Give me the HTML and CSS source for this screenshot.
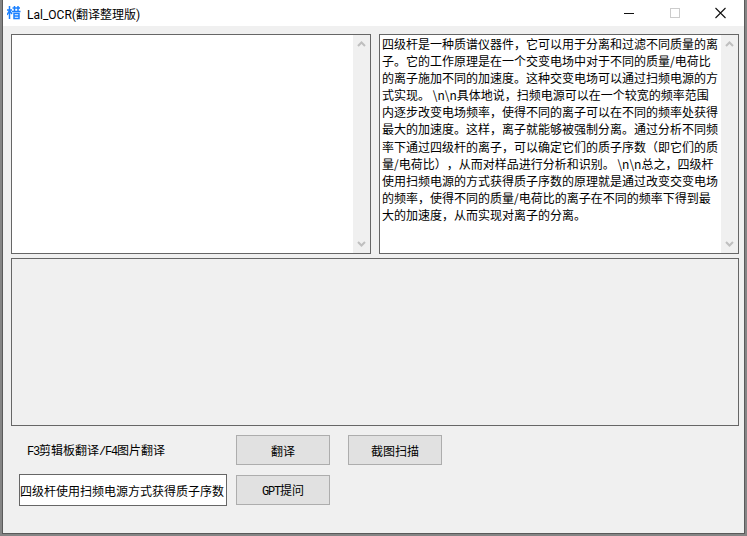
FILE: index.html
```html
<!DOCTYPE html>
<html lang="zh-CN">
<head>
  <meta charset="UTF-8" />
  <title>Lal_OCR(翻译整理版)</title>
  <link rel="stylesheet" href="styles.css">
</head>
<body>

  <div class="window">
    <div class="frame">
      <div class="titlebar">
        <svg class="app-icon" width="16" height="16" viewBox="0 0 16 16">
          <path d="M0 5h5M2.500 1v13M2.500 5.500L0 10M2.500 5.500L5 9M5.500 3h7.500M7.500 1v5M11 1v5M5 6.500h8.500M7 8.500h5v5h-5zM7 11h5" fill="none" stroke="#1a80ff" stroke-width="1.500" />
        </svg>
        <span class="title">Lal_OCR(翻译整理版)</span>
        <div class="win-buttons">
          <svg class="win-btn" width="46" height="26" viewBox="0 0 46 26"><path d="M18 13.500h10" stroke="#111" stroke-width="1" /></svg>
          <svg class="win-btn" width="46" height="26" viewBox="0 0 46 26"><rect x="18.500" y="8.500" width="9" height="9" fill="none" stroke="#ccc" /></svg>
          <svg class="win-btn" width="46" height="26" viewBox="0 0 46 26"><path d="M17.500 8l10 10M27.500 8l-10 10" stroke="#111" stroke-width="1.100" /></svg>
        </div>
      </div>

      <div class="content">
        <div class="text-row">
          <div class="textbox">
            <div class="text-body"></div>
            <div class="scrollbar">
              <svg width="9" height="6" viewBox="0 0 9 6"><path d="M1 5l3.500-3.500L8 5" fill="none" stroke="#bfbfbf" stroke-width="2" /></svg>
              <svg width="9" height="6" viewBox="0 0 9 6"><path d="M1 1l3.500 3.500L8 1" fill="none" stroke="#bfbfbf" stroke-width="2" /></svg>
            </div>
          </div>
          <div class="textbox">
            <div class="text-body">四级杆是一种质谱仪器件，它可以用于分离和过滤不同质量的离子。它的工作原理是在一个交变电场中对于不同的质量/电荷比的离子施加不同的加速度。这种交变电场可以通过扫频电源的方式实现。 \n\n具体地说，扫频电源可以在一个较宽的频率范围内逐步改变电场频率，使得不同的离子可以在不同的频率处获得最大的加速度。这样，离子就能够被强制分离。通过分析不同频率下通过四级杆的离子，可以确定它们的质子序数（即它们的质量/电荷比），从而对样品进行分析和识别。 \n\n总之，四级杆使用扫频电源的方式获得质子序数的原理就是通过改变交变电场的频率，使得不同的质量/电荷比的离子在不同的频率下得到最大的加速度，从而实现对离子的分离。</div>
            <div class="scrollbar">
              <svg width="9" height="6" viewBox="0 0 9 6"><path d="M1 5l3.500-3.500L8 5" fill="none" stroke="#bfbfbf" stroke-width="2" /></svg>
              <svg width="9" height="6" viewBox="0 0 9 6"><path d="M1 1l3.500 3.500L8 1" fill="none" stroke="#bfbfbf" stroke-width="2" /></svg>
            </div>
          </div>
        </div>

        <div class="panel"></div>

        <div class="controls">
          <div class="hint"><span class="latin">F3</span>剪辑板翻译<span class="latin">/F4</span>图片翻译</div>
          <button class="btn">翻译</button>
          <button class="btn">截图扫描</button>
          <input class="question" type="text" value="四级杆使用扫频电源方式获得质子序数" />
          <button class="btn"><span class="latin">GPT</span>提问</button>
        </div>
      </div>
    </div>
  </div>

</body>
</html>
```

FILE: styles.css
```css
html, body {
  margin: 0;
  padding: 0;
}
body {
  width: 747px;
  height: 536px;
  overflow: hidden;
  font-family: "Noto Sans CJK SC", "Liberation Sans", sans-serif;
  color: #000;
  text-spacing-trim: space-all;
}
.window {
  box-sizing: border-box;
  width: 747px;
  height: 536px;
  border: 2px solid #858585;
  border-top: none;
  display: flex;
}
.frame {
  flex: 1;
  background: #f0f0f0;
  border: 1px solid #5a5a5a;
  border-top: none;
  display: flex;
  flex-direction: column;
}
.titlebar {
  height: 26px;
  background: #fff;
  display: flex;
  align-items: center;
  flex-shrink: 0;
}
.app-icon {
  margin-left: 4px;
}
.title {
  margin-left: 4px;
  font-family: Roboto, "Noto Sans CJK SC", sans-serif;
  font-size: 12px;
}
.win-buttons {
  margin-left: auto;
  display: flex;
}
.win-btn {
  display: block;
}
.content {
  padding: 8px 5px 0 8px;
}
.text-row {
  display: flex;
  gap: 8px;
}
.textbox {
  box-sizing: border-box;
  width: 360px;
  height: 220px;
  background: #fff;
  border: 1px solid #666;
  display: flex;
}
.text-body {
  flex: 1;
  padding: 0 2px;
  font-size: 12px;
  line-height: 17.1px;
  overflow: hidden;
}
.scrollbar {
  width: 17px;
  background: #f0f0f0;
  display: flex;
  flex-direction: column;
  justify-content: space-between;
  align-items: center;
  padding: 6px 0;
  box-sizing: border-box;
}
.scrollbar svg {
  display: block;
}
.panel {
  box-sizing: border-box;
  height: 168px;
  margin-top: 4px;
  background: #f0f0f0;
  border: 1px solid #666;
}
.controls {
  display: grid;
  grid-template-columns: 208px 94px 94px;
  column-gap: 9px;
  row-gap: 9px;
  margin-top: 9px;
  margin-left: 8px;
  align-items: center;
}
.controls .btn:nth-child(3) {
  margin-left: 9px;
}
.hint {
  padding-left: 8px;
  font-size: 12px;
}
.latin {
  font-family: "Liberation Mono", monospace;
  letter-spacing: -1.2px;
}
.btn {
  box-sizing: border-box;
  width: 94px;
  height: 30px;
  padding: 0;
  background: #e1e1e1;
  border: 1px solid #adadad;
  font-family: "Noto Sans CJK SC", sans-serif;
  font-size: 12px;
  color: #000;
}
.question {
  box-sizing: border-box;
  width: 208px;
  height: 32px;
  padding: 0;
  background: #fff;
  border: 1px solid #666;
  border-radius: 0;
  outline: none;
  font-family: "Noto Sans CJK SC", sans-serif;
  font-size: 12px;
  color: #000;
}
```
